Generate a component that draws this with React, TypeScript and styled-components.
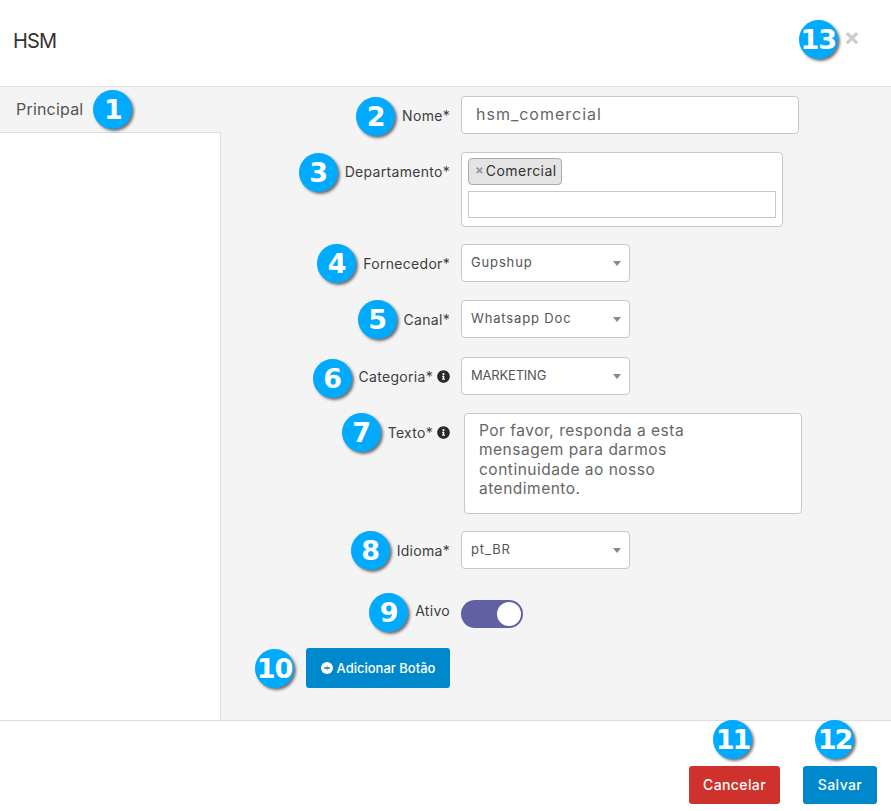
import React from "react";
import styled, { createGlobalStyle } from "styled-components";
import { FaInfoCircle } from "react-icons/fa";

const GlobalStyle = createGlobalStyle`
  html, body {
    margin: 0;
    padding: 0;
    background: #fff;
  }
  body {
    font-family: Inter, "Liberation Sans", sans-serif;
    color: #444;
  }
`;

const Modal = styled.div`
  width: 891px;
  height: 811px;
  display: flex;
  flex-direction: column;
  overflow: hidden;
`;

const Header = styled.header`
  height: 87px;
  box-sizing: border-box;
  padding: 0 31px 8px 13px;
  display: flex;
  align-items: center;
  justify-content: space-between;
  border-bottom: 1px solid #dedede;
  flex: none;
`;

const Title = styled.h1`
  margin: 4px 0 0;
  font-size: 20px;
  font-weight: 400;
  letter-spacing: -0.8px;
  color: #333;
`;

const CloseArea = styled.div`
  display: flex;
  align-items: center;
  gap: 6px;
`;

const CloseMark = styled.span`
  font-size: 24px;
  line-height: 24px;
  font-weight: 700;
  color: #ccc;
  margin-top: -4px;
`;

const Badge = styled.span<{ $dy?: number }>`
  flex: none;
  position: relative;
  top: ${(p) => p.$dy ?? 0}px;
  width: 39px;
  height: 39px;
  margin: -4px 0;
  border-radius: 50%;
  background: #00aaff;
  box-shadow: 2px 2px 3px rgba(0, 0, 0, 0.55);
  color: #fff;
  display: flex;
  align-items: center;
  justify-content: center;
  font-family: "DejaVu Sans", sans-serif;
  font-size: 27px;
  font-weight: 700;
  letter-spacing: -1px;
  line-height: 1;
`;

const Body = styled.main`
  height: 633px;
  flex: none;
  display: flex;
  background: #f4f4f4;
  border-bottom: 1px solid #dedede;
`;

const Sidebar = styled.aside`
  width: 221px;
  flex: none;
  display: flex;
  flex-direction: column;
`;

const Tab = styled.div`
  height: 45px;
  box-sizing: border-box;
  padding: 0 0 1px 16px;
  display: flex;
  align-items: center;
  gap: 10px;
  font-size: 16px;
  letter-spacing: 0.2px;
  color: #555;
`;

const SidePanel = styled.div`
  flex: 1;
  background: #fff;
  border-top: 1px solid #dedede;
  border-right: 1px solid #dedede;
`;

const Form = styled.form`
  flex: 1;
  padding-top: 9px;
  display: flex;
  flex-direction: column;
`;

const Row = styled.div<{ $gap?: number }>`
  display: grid;
  grid-template-columns: 229px 1fr;
  column-gap: 11px;
  margin-bottom: ${(p) => p.$gap ?? 18}px;
`;

const Label = styled.label<{ $top?: boolean; $gap?: number }>`
  display: flex;
  align-items: center;
  justify-content: flex-end;
  gap: ${(p) => p.$gap ?? 7}px;
  font-size: 14px;
  letter-spacing: 0.3px;
  color: #3d3d3d;
  align-self: ${(p) => (p.$top ? "start" : "stretch")};
  height: ${(p) => (p.$top ? "39px" : "auto")};
`;

const LabelText = styled.span`
  display: inline-flex;
  align-items: center;
  gap: 4px;
  svg {
    color: #2a2a2a;
  }
`;

const TextInput = styled.input`
  width: 338px;
  height: 38px;
  box-sizing: border-box;
  padding: 0 14px 2px;
  border: 1px solid #c8c8c8;
  border-radius: 4px;
  background: #fff;
  font: inherit;
  font-size: 16px;
  letter-spacing: 1px;
  color: #666;
  outline: none;
`;

const MultiBox = styled.div`
  width: 322px;
  height: 75px;
  box-sizing: border-box;
  padding: 5px 6px;
  border: 1px solid #c8c8c8;
  border-radius: 4px;
  background: #fff;
  display: flex;
  flex-direction: column;
  align-items: flex-start;
  gap: 6px;
`;

const Chip = styled.span`
  height: 27px;
  width: 94px;
  box-sizing: border-box;
  padding: 0 0 3px 6px;
  display: inline-flex;
  align-items: center;
  gap: 2px;
  border: 1px solid #aaa;
  border-radius: 4px;
  background: #e4e4e4;
  font-size: 14px;
  letter-spacing: 0.45px;
  color: #333;
`;

const ChipRemove = styled.span`
  font-size: 13px;
  font-weight: 700;
  letter-spacing: 0;
  color: #999;
`;

const SearchInput = styled.input`
  width: 100%;
  height: 27px;
  box-sizing: border-box;
  border: 1px solid #c8c8c8;
  background: #fff;
  outline: none;
`;

const SelectBox = styled.div<{ $caps?: boolean }>`
  width: 169px;
  height: 38px;
  box-sizing: border-box;
  padding: 0 8px 3px 9px;
  border: 1px solid #c8c8c8;
  border-radius: 4px;
  background: #fff;
  display: flex;
  align-items: center;
  justify-content: space-between;
  font-size: 13px;
  letter-spacing: ${(p) => (p.$caps ? "-0.2px" : "0.85px")};
  color: #555;
`;

const Caret = styled.span`
  width: 0;
  height: 0;
  margin-top: 3px;
  border-left: 4px solid transparent;
  border-right: 4px solid transparent;
  border-top: 5px solid #888;
`;

const TextArea = styled.textarea`
  display: block;
  width: 338px;
  height: 101px;
  margin-left: 3px;
  box-sizing: border-box;
  padding: 7px 14px;
  border: 1px solid #c8c8c8;
  border-radius: 4px;
  background: #fff;
  font: inherit;
  font-size: 15.5px;
  letter-spacing: 0.5px;
  line-height: 19.4px;
  color: #666;
  resize: none;
  outline: none;
`;

const Toggle = styled.span`
  width: 62px;
  height: 28px;
  margin-top: 8px;
  box-sizing: border-box;
  padding: 2px;
  border-radius: 14px;
  background: #6061a5;
  display: flex;
  justify-content: flex-end;
`;

const Knob = styled.span`
  width: 24px;
  height: 24px;
  border-radius: 50%;
  background: #fff;
`;

const Button = styled.button<{ $color: string }>`
  height: 38px;
  padding: 0;
  border: none;
  border-radius: 3px;
  background: ${(p) => p.$color};
  color: #fff;
  font: inherit;
  font-size: 13px;
  font-weight: 500;
  display: inline-flex;
  align-items: center;
  justify-content: center;
  position: relative;
`;

const AddButton = styled(Button)`
  width: 144px;
  height: 40px;
  gap: 4px;
  letter-spacing: 0;
`;

const Footer = styled.footer`
  flex: 1;
  padding: 45px 14px 0 0;
  display: flex;
  justify-content: flex-end;
  align-items: flex-start;
  gap: 23px;
`;

const FooterButton = styled(Button)<{ $width: number }>`
  width: ${(p) => p.$width}px;
  font-size: 14px;
  letter-spacing: 0.4px;
  padding-bottom: 2px;
`;

const FooterBadge = styled(Badge)<{ $left: number }>`
  position: absolute;
  top: -46px;
  left: ${(p) => p.$left}px;
  margin: 0;
  letter-spacing: -2px;
`;

const PlusDot = () => (
  <svg width="12" height="12" viewBox="0 0 12 12" aria-hidden="true">
    <circle cx="6" cy="6" r="6" fill="#fff" />
    <rect x="5.4" y="3.4" width="1.2" height="5.2" fill="#8cc6e6" />
    <rect x="3.2" y="5.3" width="5.6" height="1.4" fill="#0a6ea6" />
  </svg>
);

const selects = [
  { n: 4, label: "Fornecedor*", value: "Gupshup", dy: 0.5, gap: 18 },
  { n: 5, label: "Canal*", value: "Whatsapp Doc", dy: 0, gap: 19 },
  { n: 6, label: "Categoria*", value: "MARKETING", dy: 2, gap: 18, info: true },
];

export default function App() {
  return (
    <>
      <GlobalStyle />
      <Modal>
        <Header>
          <Title>HSM</Title>
          <CloseArea>
            <Badge>13</Badge>
            <CloseMark>×</CloseMark>
          </CloseArea>
        </Header>
        <Body>
          <Sidebar>
            <Tab>
              Principal
              <Badge>1</Badge>
            </Tab>
            <SidePanel />
          </Sidebar>
          <Form>
            <Row>
              <Label>
                <Badge $dy={1}>2</Badge>
                <LabelText>Nome*</LabelText>
              </Label>
              <TextInput defaultValue="hsm_comercial" />
            </Row>
            <Row $gap={17}>
              <Label $top>
                <Badge $dy={1}>3</Badge>
                <LabelText>Departamento*</LabelText>
              </Label>
              <MultiBox>
                <Chip>
                  <ChipRemove>×</ChipRemove>
                  Comercial
                </Chip>
                <SearchInput />
              </MultiBox>
            </Row>
            {selects.map((s) => (
              <Row key={s.n} $gap={s.gap}>
                <Label>
                  <Badge $dy={s.dy}>{s.n}</Badge>
                  <LabelText>
                    {s.label}
                    {s.info && <FaInfoCircle size={13} />}
                  </LabelText>
                </Label>
                <SelectBox $caps={s.value === "MARKETING"}>
                  {s.value}
                  <Caret />
                </SelectBox>
              </Row>
            ))}
            <Row $gap={17}>
              <Label $top>
                <Badge>7</Badge>
                <LabelText>
                  Texto*
                  <FaInfoCircle size={13} />
                </LabelText>
              </Label>
              <TextArea
                defaultValue={"Por favor, responda a esta\nmensagem para darmos\ncontinuidade ao nosso\natendimento."}
              />
            </Row>
            <Row $gap={23}>
              <Label>
                <Badge>8</Badge>
                <LabelText>Idioma*</LabelText>
              </Label>
              <SelectBox>
                pt_BR
                <Caret />
              </SelectBox>
            </Row>
            <Row $gap={20}>
              <Label>
                <Badge $dy={2}>9</Badge>
                <LabelText>Ativo</LabelText>
              </Label>
              <Toggle>
                <Knob />
              </Toggle>
            </Row>
            <Row>
              <Label $gap={12}>
                <Badge>10</Badge>
                <AddButton $color="#0088cc" type="button">
                  <PlusDot />
                  Adicionar Botão
                </AddButton>
              </Label>
            </Row>
          </Form>
        </Body>
        <Footer>
          <FooterButton $color="#cf312c" $width={91} type="button">
            <FooterBadge $left={24}>11</FooterBadge>
            Cancelar
          </FooterButton>
          <FooterButton $color="#0088cc" $width={74} type="button">
            <FooterBadge $left={12}>12</FooterBadge>
            Salvar
          </FooterButton>
        </Footer>
      </Modal>
    </>
  );
}
